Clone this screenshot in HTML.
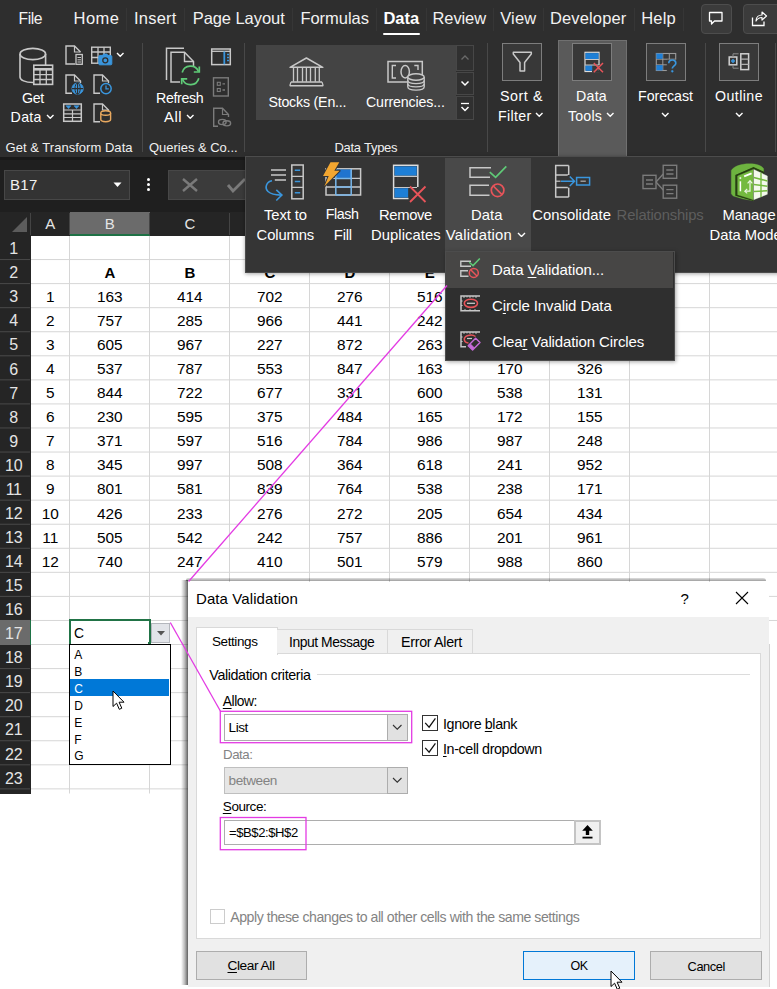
<!DOCTYPE html>
<html><head><meta charset="utf-8"><title>Data Validation</title>
<style>
html,body{margin:0;padding:0;}
body{width:777px;height:989px;overflow:hidden;position:relative;background:#fff;font-family:"Liberation Sans",sans-serif;}
.b{position:absolute;box-sizing:border-box;display:block;}
.t{position:absolute;white-space:nowrap;display:block;}
u{text-decoration:underline;text-underline-offset:2px;text-decoration-thickness:1px;}
</style></head><body>
<svg class="b" style="left:0px;top:0px;" width="777" height="989" viewBox="0 0 777 989"><g stroke="#d6d6d6" stroke-width="1" fill="none"><path d="M69.5 235.5 V793.5"/><path d="M149.5 235.5 V793.5"/><path d="M229.5 235.5 V793.5"/><path d="M309.5 235.5 V793.5"/><path d="M389.5 235.5 V793.5"/><path d="M469.5 235.5 V793.5"/><path d="M549.5 235.5 V793.5"/><path d="M629.5 235.5 V793.5"/><path d="M709.5 235.5 V793.5"/><path d="M30 259.56 H777"/><path d="M30 283.62 H777"/><path d="M30 307.68 H777"/><path d="M30 331.74 H777"/><path d="M30 355.8 H777"/><path d="M30 379.86 H777"/><path d="M30 403.92 H777"/><path d="M30 427.98 H777"/><path d="M30 452.04 H777"/><path d="M30 476.1 H777"/><path d="M30 500.16 H777"/><path d="M30 524.22 H777"/><path d="M30 548.28 H777"/><path d="M30 572.34 H777"/><path d="M30 596.4 H777"/><path d="M30 620.46 H777"/><path d="M30 644.52 H777"/><path d="M30 668.58 H777"/><path d="M30 692.64 H777"/><path d="M30 716.7 H777"/><path d="M30 740.76 H777"/><path d="M30 764.82 H777"/><path d="M30 788.88 H777"/></g></svg>
<span class="t" style="left:104.4px;top:263.9px;font-size:15px;line-height:18px;letter-spacing:0.00px;color:#000;font-weight:bold;">A</span>
<span class="t" style="left:184.4px;top:263.9px;font-size:15px;line-height:18px;letter-spacing:0.00px;color:#000;font-weight:bold;">B</span>
<span class="t" style="left:264.4px;top:263.9px;font-size:15px;line-height:18px;letter-spacing:0.00px;color:#000;font-weight:bold;">C</span>
<span class="t" style="left:344.4px;top:263.9px;font-size:15px;line-height:18px;letter-spacing:0.00px;color:#000;font-weight:bold;">D</span>
<span class="t" style="left:424.8px;top:263.9px;font-size:15px;line-height:18px;letter-spacing:0.00px;color:#000;font-weight:bold;">E</span>
<span class="t" style="left:505.2px;top:263.9px;font-size:15px;line-height:18px;letter-spacing:0.00px;color:#000;font-weight:bold;">F</span>
<span class="t" style="left:584.0px;top:263.9px;font-size:15px;line-height:18px;letter-spacing:0.00px;color:#000;font-weight:bold;">G</span>
<span class="t" style="left:46.0px;top:287.9px;font-size:15.4px;line-height:18px;letter-spacing:0.00px;color:#000;">1</span>
<span class="t" style="left:96.9px;top:287.9px;font-size:15.4px;line-height:18px;letter-spacing:0.05px;color:#000;">163</span>
<span class="t" style="left:176.9px;top:287.9px;font-size:15.4px;line-height:18px;letter-spacing:0.05px;color:#000;">414</span>
<span class="t" style="left:256.9px;top:287.9px;font-size:15.4px;line-height:18px;letter-spacing:0.05px;color:#000;">702</span>
<span class="t" style="left:336.9px;top:287.9px;font-size:15.4px;line-height:18px;letter-spacing:0.05px;color:#000;">276</span>
<span class="t" style="left:416.9px;top:287.9px;font-size:15.4px;line-height:18px;letter-spacing:0.05px;color:#000;">516</span>
<span class="t" style="left:496.9px;top:287.9px;font-size:15.4px;line-height:18px;letter-spacing:0.05px;color:#000;">358</span>
<span class="t" style="left:576.9px;top:287.9px;font-size:15.4px;line-height:18px;letter-spacing:0.05px;color:#000;">907</span>
<span class="t" style="left:46.0px;top:312.0px;font-size:15.4px;line-height:18px;letter-spacing:0.00px;color:#000;">2</span>
<span class="t" style="left:96.9px;top:312.0px;font-size:15.4px;line-height:18px;letter-spacing:0.05px;color:#000;">757</span>
<span class="t" style="left:176.9px;top:312.0px;font-size:15.4px;line-height:18px;letter-spacing:0.05px;color:#000;">285</span>
<span class="t" style="left:256.9px;top:312.0px;font-size:15.4px;line-height:18px;letter-spacing:0.05px;color:#000;">966</span>
<span class="t" style="left:336.9px;top:312.0px;font-size:15.4px;line-height:18px;letter-spacing:0.05px;color:#000;">441</span>
<span class="t" style="left:416.9px;top:312.0px;font-size:15.4px;line-height:18px;letter-spacing:0.05px;color:#000;">242</span>
<span class="t" style="left:496.9px;top:312.0px;font-size:15.4px;line-height:18px;letter-spacing:0.05px;color:#000;">619</span>
<span class="t" style="left:576.9px;top:312.0px;font-size:15.4px;line-height:18px;letter-spacing:0.05px;color:#000;">473</span>
<span class="t" style="left:46.0px;top:336.0px;font-size:15.4px;line-height:18px;letter-spacing:0.00px;color:#000;">3</span>
<span class="t" style="left:96.9px;top:336.0px;font-size:15.4px;line-height:18px;letter-spacing:0.05px;color:#000;">605</span>
<span class="t" style="left:176.9px;top:336.0px;font-size:15.4px;line-height:18px;letter-spacing:0.05px;color:#000;">967</span>
<span class="t" style="left:256.9px;top:336.0px;font-size:15.4px;line-height:18px;letter-spacing:0.05px;color:#000;">227</span>
<span class="t" style="left:336.9px;top:336.0px;font-size:15.4px;line-height:18px;letter-spacing:0.05px;color:#000;">872</span>
<span class="t" style="left:416.9px;top:336.0px;font-size:15.4px;line-height:18px;letter-spacing:0.05px;color:#000;">263</span>
<span class="t" style="left:496.9px;top:336.0px;font-size:15.4px;line-height:18px;letter-spacing:0.05px;color:#000;">745</span>
<span class="t" style="left:576.9px;top:336.0px;font-size:15.4px;line-height:18px;letter-spacing:0.05px;color:#000;">582</span>
<span class="t" style="left:46.0px;top:360.1px;font-size:15.4px;line-height:18px;letter-spacing:0.00px;color:#000;">4</span>
<span class="t" style="left:96.9px;top:360.1px;font-size:15.4px;line-height:18px;letter-spacing:0.05px;color:#000;">537</span>
<span class="t" style="left:176.9px;top:360.1px;font-size:15.4px;line-height:18px;letter-spacing:0.05px;color:#000;">787</span>
<span class="t" style="left:256.9px;top:360.1px;font-size:15.4px;line-height:18px;letter-spacing:0.05px;color:#000;">553</span>
<span class="t" style="left:336.9px;top:360.1px;font-size:15.4px;line-height:18px;letter-spacing:0.05px;color:#000;">847</span>
<span class="t" style="left:416.9px;top:360.1px;font-size:15.4px;line-height:18px;letter-spacing:0.05px;color:#000;">163</span>
<span class="t" style="left:496.9px;top:360.1px;font-size:15.4px;line-height:18px;letter-spacing:0.05px;color:#000;">170</span>
<span class="t" style="left:576.9px;top:360.1px;font-size:15.4px;line-height:18px;letter-spacing:0.05px;color:#000;">326</span>
<span class="t" style="left:46.0px;top:384.2px;font-size:15.4px;line-height:18px;letter-spacing:0.00px;color:#000;">5</span>
<span class="t" style="left:96.9px;top:384.2px;font-size:15.4px;line-height:18px;letter-spacing:0.05px;color:#000;">844</span>
<span class="t" style="left:176.9px;top:384.2px;font-size:15.4px;line-height:18px;letter-spacing:0.05px;color:#000;">722</span>
<span class="t" style="left:256.9px;top:384.2px;font-size:15.4px;line-height:18px;letter-spacing:0.05px;color:#000;">677</span>
<span class="t" style="left:336.9px;top:384.2px;font-size:15.4px;line-height:18px;letter-spacing:0.05px;color:#000;">331</span>
<span class="t" style="left:416.9px;top:384.2px;font-size:15.4px;line-height:18px;letter-spacing:0.05px;color:#000;">600</span>
<span class="t" style="left:496.9px;top:384.2px;font-size:15.4px;line-height:18px;letter-spacing:0.05px;color:#000;">538</span>
<span class="t" style="left:576.9px;top:384.2px;font-size:15.4px;line-height:18px;letter-spacing:0.05px;color:#000;">131</span>
<span class="t" style="left:46.0px;top:408.2px;font-size:15.4px;line-height:18px;letter-spacing:0.00px;color:#000;">6</span>
<span class="t" style="left:96.9px;top:408.2px;font-size:15.4px;line-height:18px;letter-spacing:0.05px;color:#000;">230</span>
<span class="t" style="left:176.9px;top:408.2px;font-size:15.4px;line-height:18px;letter-spacing:0.05px;color:#000;">595</span>
<span class="t" style="left:256.9px;top:408.2px;font-size:15.4px;line-height:18px;letter-spacing:0.05px;color:#000;">375</span>
<span class="t" style="left:336.9px;top:408.2px;font-size:15.4px;line-height:18px;letter-spacing:0.05px;color:#000;">484</span>
<span class="t" style="left:416.9px;top:408.2px;font-size:15.4px;line-height:18px;letter-spacing:0.05px;color:#000;">165</span>
<span class="t" style="left:496.9px;top:408.2px;font-size:15.4px;line-height:18px;letter-spacing:0.05px;color:#000;">172</span>
<span class="t" style="left:576.9px;top:408.2px;font-size:15.4px;line-height:18px;letter-spacing:0.05px;color:#000;">155</span>
<span class="t" style="left:46.0px;top:432.3px;font-size:15.4px;line-height:18px;letter-spacing:0.00px;color:#000;">7</span>
<span class="t" style="left:96.9px;top:432.3px;font-size:15.4px;line-height:18px;letter-spacing:0.05px;color:#000;">371</span>
<span class="t" style="left:176.9px;top:432.3px;font-size:15.4px;line-height:18px;letter-spacing:0.05px;color:#000;">597</span>
<span class="t" style="left:256.9px;top:432.3px;font-size:15.4px;line-height:18px;letter-spacing:0.05px;color:#000;">516</span>
<span class="t" style="left:336.9px;top:432.3px;font-size:15.4px;line-height:18px;letter-spacing:0.05px;color:#000;">784</span>
<span class="t" style="left:416.9px;top:432.3px;font-size:15.4px;line-height:18px;letter-spacing:0.05px;color:#000;">986</span>
<span class="t" style="left:496.9px;top:432.3px;font-size:15.4px;line-height:18px;letter-spacing:0.05px;color:#000;">987</span>
<span class="t" style="left:576.9px;top:432.3px;font-size:15.4px;line-height:18px;letter-spacing:0.05px;color:#000;">248</span>
<span class="t" style="left:46.0px;top:456.3px;font-size:15.4px;line-height:18px;letter-spacing:0.00px;color:#000;">8</span>
<span class="t" style="left:96.9px;top:456.3px;font-size:15.4px;line-height:18px;letter-spacing:0.05px;color:#000;">345</span>
<span class="t" style="left:176.9px;top:456.3px;font-size:15.4px;line-height:18px;letter-spacing:0.05px;color:#000;">997</span>
<span class="t" style="left:256.9px;top:456.3px;font-size:15.4px;line-height:18px;letter-spacing:0.05px;color:#000;">508</span>
<span class="t" style="left:336.9px;top:456.3px;font-size:15.4px;line-height:18px;letter-spacing:0.05px;color:#000;">364</span>
<span class="t" style="left:416.9px;top:456.3px;font-size:15.4px;line-height:18px;letter-spacing:0.05px;color:#000;">618</span>
<span class="t" style="left:496.9px;top:456.3px;font-size:15.4px;line-height:18px;letter-spacing:0.05px;color:#000;">241</span>
<span class="t" style="left:576.9px;top:456.3px;font-size:15.4px;line-height:18px;letter-spacing:0.05px;color:#000;">952</span>
<span class="t" style="left:46.0px;top:480.4px;font-size:15.4px;line-height:18px;letter-spacing:0.00px;color:#000;">9</span>
<span class="t" style="left:96.9px;top:480.4px;font-size:15.4px;line-height:18px;letter-spacing:0.05px;color:#000;">801</span>
<span class="t" style="left:176.9px;top:480.4px;font-size:15.4px;line-height:18px;letter-spacing:0.05px;color:#000;">581</span>
<span class="t" style="left:256.9px;top:480.4px;font-size:15.4px;line-height:18px;letter-spacing:0.05px;color:#000;">839</span>
<span class="t" style="left:336.9px;top:480.4px;font-size:15.4px;line-height:18px;letter-spacing:0.05px;color:#000;">764</span>
<span class="t" style="left:416.9px;top:480.4px;font-size:15.4px;line-height:18px;letter-spacing:0.05px;color:#000;">538</span>
<span class="t" style="left:496.9px;top:480.4px;font-size:15.4px;line-height:18px;letter-spacing:0.05px;color:#000;">238</span>
<span class="t" style="left:576.9px;top:480.4px;font-size:15.4px;line-height:18px;letter-spacing:0.05px;color:#000;">171</span>
<span class="t" style="left:41.7px;top:504.5px;font-size:15.4px;line-height:18px;letter-spacing:0.05px;color:#000;">10</span>
<span class="t" style="left:96.9px;top:504.5px;font-size:15.4px;line-height:18px;letter-spacing:0.05px;color:#000;">426</span>
<span class="t" style="left:176.9px;top:504.5px;font-size:15.4px;line-height:18px;letter-spacing:0.05px;color:#000;">233</span>
<span class="t" style="left:256.9px;top:504.5px;font-size:15.4px;line-height:18px;letter-spacing:0.05px;color:#000;">276</span>
<span class="t" style="left:336.9px;top:504.5px;font-size:15.4px;line-height:18px;letter-spacing:0.05px;color:#000;">272</span>
<span class="t" style="left:416.9px;top:504.5px;font-size:15.4px;line-height:18px;letter-spacing:0.05px;color:#000;">205</span>
<span class="t" style="left:496.9px;top:504.5px;font-size:15.4px;line-height:18px;letter-spacing:0.05px;color:#000;">654</span>
<span class="t" style="left:576.9px;top:504.5px;font-size:15.4px;line-height:18px;letter-spacing:0.05px;color:#000;">434</span>
<span class="t" style="left:42.3px;top:528.5px;font-size:15.4px;line-height:18px;letter-spacing:0.05px;color:#000;">11</span>
<span class="t" style="left:96.9px;top:528.5px;font-size:15.4px;line-height:18px;letter-spacing:0.05px;color:#000;">505</span>
<span class="t" style="left:176.9px;top:528.5px;font-size:15.4px;line-height:18px;letter-spacing:0.05px;color:#000;">542</span>
<span class="t" style="left:256.9px;top:528.5px;font-size:15.4px;line-height:18px;letter-spacing:0.05px;color:#000;">242</span>
<span class="t" style="left:336.9px;top:528.5px;font-size:15.4px;line-height:18px;letter-spacing:0.05px;color:#000;">757</span>
<span class="t" style="left:416.9px;top:528.5px;font-size:15.4px;line-height:18px;letter-spacing:0.05px;color:#000;">886</span>
<span class="t" style="left:496.9px;top:528.5px;font-size:15.4px;line-height:18px;letter-spacing:0.05px;color:#000;">201</span>
<span class="t" style="left:576.9px;top:528.5px;font-size:15.4px;line-height:18px;letter-spacing:0.05px;color:#000;">961</span>
<span class="t" style="left:41.7px;top:552.6px;font-size:15.4px;line-height:18px;letter-spacing:0.05px;color:#000;">12</span>
<span class="t" style="left:96.9px;top:552.6px;font-size:15.4px;line-height:18px;letter-spacing:0.05px;color:#000;">740</span>
<span class="t" style="left:176.9px;top:552.6px;font-size:15.4px;line-height:18px;letter-spacing:0.05px;color:#000;">247</span>
<span class="t" style="left:256.9px;top:552.6px;font-size:15.4px;line-height:18px;letter-spacing:0.05px;color:#000;">410</span>
<span class="t" style="left:336.9px;top:552.6px;font-size:15.4px;line-height:18px;letter-spacing:0.05px;color:#000;">501</span>
<span class="t" style="left:416.9px;top:552.6px;font-size:15.4px;line-height:18px;letter-spacing:0.05px;color:#000;">579</span>
<span class="t" style="left:496.9px;top:552.6px;font-size:15.4px;line-height:18px;letter-spacing:0.05px;color:#000;">988</span>
<span class="t" style="left:576.9px;top:552.6px;font-size:15.4px;line-height:18px;letter-spacing:0.05px;color:#000;">860</span>
<div class="b " style="left:0px;top:212px;width:31px;height:581.5px;background:#252525;"></div>
<svg class="b" style="left:0px;top:0px;" width="31" height="800" viewBox="0 0 31 800"><g stroke="#4a4a4a" stroke-width="1"><path d="M0 259.56 H30"/><path d="M0 283.62 H30"/><path d="M0 307.68 H30"/><path d="M0 331.74 H30"/><path d="M0 355.8 H30"/><path d="M0 379.86 H30"/><path d="M0 403.92 H30"/><path d="M0 427.98 H30"/><path d="M0 452.04 H30"/><path d="M0 476.1 H30"/><path d="M0 500.16 H30"/><path d="M0 524.22 H30"/><path d="M0 548.28 H30"/><path d="M0 572.34 H30"/><path d="M0 596.4 H30"/><path d="M0 620.46 H30"/><path d="M0 644.52 H30"/><path d="M0 668.58 H30"/><path d="M0 692.64 H30"/><path d="M0 716.7 H30"/><path d="M0 740.76 H30"/><path d="M0 764.82 H30"/><path d="M0 788.88 H30"/></g></svg>
<div class="b " style="left:0px;top:620.46px;width:30px;height:24.06px;background:#6b6b6b;"></div>
<div class="b " style="left:29.5px;top:619.96px;width:1.5px;height:25.06px;background:#1e7145;"></div>
<span class="t" style="left:9.3px;top:239.2px;font-size:16px;line-height:19px;letter-spacing:0.00px;color:#e4e4e4;">1</span>
<span class="t" style="left:9.3px;top:263.3px;font-size:16px;line-height:19px;letter-spacing:0.00px;color:#e4e4e4;">2</span>
<span class="t" style="left:9.3px;top:287.3px;font-size:16px;line-height:19px;letter-spacing:0.00px;color:#e4e4e4;">3</span>
<span class="t" style="left:9.3px;top:311.4px;font-size:16px;line-height:19px;letter-spacing:0.00px;color:#e4e4e4;">4</span>
<span class="t" style="left:9.3px;top:335.4px;font-size:16px;line-height:19px;letter-spacing:0.00px;color:#e4e4e4;">5</span>
<span class="t" style="left:9.3px;top:359.5px;font-size:16px;line-height:19px;letter-spacing:0.00px;color:#e4e4e4;">6</span>
<span class="t" style="left:9.3px;top:383.6px;font-size:16px;line-height:19px;letter-spacing:0.00px;color:#e4e4e4;">7</span>
<span class="t" style="left:9.3px;top:407.6px;font-size:16px;line-height:19px;letter-spacing:0.00px;color:#e4e4e4;">8</span>
<span class="t" style="left:9.3px;top:431.7px;font-size:16px;line-height:19px;letter-spacing:0.00px;color:#e4e4e4;">9</span>
<span class="t" style="left:5.1px;top:455.7px;font-size:16px;line-height:19px;letter-spacing:-0.30px;color:#e4e4e4;">10</span>
<span class="t" style="left:5.7px;top:479.8px;font-size:16px;line-height:19px;letter-spacing:-0.30px;color:#e4e4e4;">11</span>
<span class="t" style="left:5.1px;top:503.9px;font-size:16px;line-height:19px;letter-spacing:-0.30px;color:#e4e4e4;">12</span>
<span class="t" style="left:5.1px;top:527.9px;font-size:16px;line-height:19px;letter-spacing:-0.30px;color:#e4e4e4;">13</span>
<span class="t" style="left:5.1px;top:552.0px;font-size:16px;line-height:19px;letter-spacing:-0.30px;color:#e4e4e4;">14</span>
<span class="t" style="left:5.1px;top:576.0px;font-size:16px;line-height:19px;letter-spacing:-0.30px;color:#e4e4e4;">15</span>
<span class="t" style="left:5.1px;top:600.1px;font-size:16px;line-height:19px;letter-spacing:-0.30px;color:#e4e4e4;">16</span>
<span class="t" style="left:5.1px;top:624.2px;font-size:16px;line-height:19px;letter-spacing:-0.30px;color:#e4e4e4;">17</span>
<span class="t" style="left:5.1px;top:648.2px;font-size:16px;line-height:19px;letter-spacing:-0.30px;color:#e4e4e4;">18</span>
<span class="t" style="left:5.1px;top:672.3px;font-size:16px;line-height:19px;letter-spacing:-0.30px;color:#e4e4e4;">19</span>
<span class="t" style="left:5.1px;top:696.3px;font-size:16px;line-height:19px;letter-spacing:-0.30px;color:#e4e4e4;">20</span>
<span class="t" style="left:5.1px;top:720.4px;font-size:16px;line-height:19px;letter-spacing:-0.30px;color:#e4e4e4;">21</span>
<span class="t" style="left:5.1px;top:744.5px;font-size:16px;line-height:19px;letter-spacing:-0.30px;color:#e4e4e4;">22</span>
<span class="t" style="left:5.1px;top:768.5px;font-size:16px;line-height:19px;letter-spacing:-0.30px;color:#e4e4e4;">23</span>
<div class="b " style="left:0px;top:157px;width:777px;height:55px;background:#1f1f1f;"></div>
<div class="b " style="left:0px;top:157px;width:777px;height:3px;background:#191919;"></div>
<div class="b " style="left:0px;top:212px;width:777px;height:23.5px;background:#252525;"></div>
<div class="b " style="left:69.5px;top:212px;width:80px;height:23.5px;background:#6b6b6b;"></div>
<div class="b " style="left:69.5px;top:234.2px;width:80px;height:1.6px;background:#1e7145;"></div>
<svg class="b" style="left:0px;top:0px;" width="777" height="240" viewBox="0 0 777 240"><g stroke="#444444" stroke-width="1"><path d="M30.5 213 V235"/><path d="M69.5 213 V235"/><path d="M149.5 213 V235"/><path d="M229.5 213 V235"/><path d="M309.5 213 V235"/><path d="M389.5 213 V235"/><path d="M469.5 213 V235"/><path d="M549.5 213 V235"/><path d="M629.5 213 V235"/><path d="M709.5 213 V235"/></g></svg>
<svg class="b" style="left:11px;top:216px;" width="17" height="17" viewBox="0 0 17 17"><path d="M16 1 V16 H1 Z" fill="#5c5c5c"/></svg>
<span class="t" style="left:45.3px;top:215.0px;font-size:15px;line-height:18px;letter-spacing:0.00px;color:#e4e4e4;">A</span>
<span class="t" style="left:104.8px;top:215.0px;font-size:15px;line-height:18px;letter-spacing:0.00px;color:#e4e4e4;">B</span>
<span class="t" style="left:184.4px;top:215.0px;font-size:15px;line-height:18px;letter-spacing:0.00px;color:#e4e4e4;">C</span>
<span class="t" style="left:264.4px;top:215.0px;font-size:15px;line-height:18px;letter-spacing:0.00px;color:#e4e4e4;">D</span>
<span class="t" style="left:344.8px;top:215.0px;font-size:15px;line-height:18px;letter-spacing:0.00px;color:#e4e4e4;">E</span>
<span class="t" style="left:425.2px;top:215.0px;font-size:15px;line-height:18px;letter-spacing:0.00px;color:#e4e4e4;">F</span>
<span class="t" style="left:504.0px;top:215.0px;font-size:15px;line-height:18px;letter-spacing:0.00px;color:#e4e4e4;">G</span>
<span class="t" style="left:584.4px;top:215.0px;font-size:15px;line-height:18px;letter-spacing:0.00px;color:#e4e4e4;">H</span>
<span class="t" style="left:667.7px;top:215.0px;font-size:15px;line-height:18px;letter-spacing:0.00px;color:#e4e4e4;">I</span>
<div class="b " style="left:3.5px;top:170px;width:126.5px;height:29.5px;background:#333333;border:1px solid #474747;"></div>
<span class="t" style="left:10.0px;top:176.0px;font-size:15px;line-height:18px;letter-spacing:0.27px;color:#f0f0f0;">B17</span>
<svg class="b" style="left:113px;top:182px;" width="9" height="6" viewBox="0 0 9 6"><path d="M0.5 0.5 H8.5 L4.5 5 Z" fill="#fff"/></svg>
<svg class="b" style="left:146px;top:177px;" width="5" height="15" viewBox="0 0 5 15"><circle cx="2.5" cy="2.5" r="1.5" fill="#fff"/><circle cx="2.5" cy="7.5" r="1.5" fill="#fff"/><circle cx="2.5" cy="12.5" r="1.5" fill="#fff"/></svg>
<div class="b " style="left:167.5px;top:170px;width:132.5px;height:29.5px;background:#3b3b3b;border:1px solid #474747;"></div>
<svg class="b" style="left:181px;top:177px;" width="18" height="16" viewBox="0 0 18 16"><path d="M2 2 L16 14 M16 2 L2 14" stroke="#7a7a7a" stroke-width="2.4" fill="none"/></svg>
<svg class="b" style="left:226px;top:177px;" width="20" height="16" viewBox="0 0 20 16"><path d="M2 8 L7 14 L19 2" stroke="#7a7a7a" stroke-width="2.8" fill="none"/></svg>
<div class="b " style="left:0px;top:0px;width:777px;height:157px;background:#2e2e2e;"></div>
<span class="t" style="left:18.5px;top:8.9px;font-size:15.7px;line-height:19px;letter-spacing:-0.45px;color:#f2f2f2;">File</span>
<span class="t" style="left:73.5px;top:8.4px;font-size:16.5px;line-height:20px;letter-spacing:0.50px;color:#f2f2f2;">Home</span>
<span class="t" style="left:134.0px;top:8.4px;font-size:16.5px;line-height:20px;letter-spacing:0.21px;color:#f2f2f2;">Insert</span>
<span class="t" style="left:192.7px;top:8.4px;font-size:16.5px;line-height:20px;letter-spacing:-0.06px;color:#f2f2f2;">Page Layout</span>
<span class="t" style="left:300.4px;top:8.4px;font-size:16.5px;line-height:20px;letter-spacing:-0.02px;color:#f2f2f2;">Formulas</span>
<span class="t" style="left:432.5px;top:8.4px;font-size:16.5px;line-height:20px;letter-spacing:-0.10px;color:#f2f2f2;">Review</span>
<span class="t" style="left:500.3px;top:8.4px;font-size:16.5px;line-height:20px;letter-spacing:0.11px;color:#f2f2f2;">View</span>
<span class="t" style="left:550.0px;top:8.4px;font-size:16.5px;line-height:20px;letter-spacing:0.13px;color:#f2f2f2;">Developer</span>
<span class="t" style="left:641.3px;top:8.4px;font-size:16.5px;line-height:20px;letter-spacing:0.12px;color:#f2f2f2;">Help</span>
<span class="t" style="left:383.4px;top:8.4px;font-size:16.5px;line-height:20px;letter-spacing:0.01px;color:#ffffff;font-weight:bold;">Data</span>
<div class="b " style="left:383px;top:32.5px;width:37px;height:2.7px;background:#ffffff;border-radius:1px;"></div>
<div class="b " style="left:126px;top:8px;width:1px;height:23px;background:#363636;"></div>
<div class="b " style="left:184px;top:8px;width:1px;height:23px;background:#363636;"></div>
<div class="b " style="left:292px;top:8px;width:1px;height:23px;background:#363636;"></div>
<div class="b " style="left:376px;top:8px;width:1px;height:23px;background:#363636;"></div>
<div class="b " style="left:426px;top:8px;width:1px;height:23px;background:#363636;"></div>
<div class="b " style="left:493px;top:8px;width:1px;height:23px;background:#363636;"></div>
<div class="b " style="left:543px;top:8px;width:1px;height:23px;background:#363636;"></div>
<div class="b " style="left:634px;top:8px;width:1px;height:23px;background:#363636;"></div>
<div class="b " style="left:683px;top:8px;width:1px;height:23px;background:#363636;"></div>
<div class="b " style="left:700.5px;top:4px;width:31px;height:29.5px;background:#3b3b3b;border:1px solid #4d4d4d;border-radius:4px;"></div>
<div class="b " style="left:742.5px;top:4px;width:47.5px;height:29.5px;background:#3b3b3b;border:1px solid #4d4d4d;border-radius:4px;"></div>
<svg class="b" style="left:708px;top:11px;" width="16" height="15" viewBox="0 0 16 15"><path d="M1.5 1.5 H14 V10 H6.5 L3.5 13 V10 H1.5 Z" fill="none" stroke="#fff" stroke-width="1.3" stroke-linejoin="round"/></svg>
<svg class="b" style="left:751px;top:10px;" width="17" height="17" viewBox="0 0 17 17"><path d="M1.5 7.5 V15.5 H13 V11.5" fill="none" stroke="#fff" stroke-width="1.3"/><path d="M5 11 C5 7 8 5 11 5 V2 L15.5 6 L11 10 V7.5 C8.5 7.5 6.5 8.5 5 11 Z" fill="none" stroke="#fff" stroke-width="1.2" stroke-linejoin="round"/></svg>
<div class="b " style="left:142px;top:43px;width:1px;height:109px;background:#484848;"></div>
<div class="b " style="left:244px;top:43px;width:1px;height:109px;background:#484848;"></div>
<div class="b " style="left:487px;top:43px;width:1px;height:109px;background:#484848;"></div>
<div class="b " style="left:704.5px;top:43px;width:1px;height:109px;background:#484848;"></div>
<div class="b " style="left:775px;top:43px;width:1px;height:109px;background:#484848;"></div>
<span class="t" style="left:22.0px;top:89.5px;font-size:14.2px;line-height:17px;letter-spacing:-0.30px;color:#fff;">Get</span>
<span class="t" style="left:10.6px;top:108.5px;font-size:14.2px;line-height:17px;letter-spacing:0.30px;color:#fff;">Data</span>
<svg class="b" style="left:45.75px;top:113.775px;" width="8.5" height="5.25" viewBox="0 0 8.5 5.25"><path d="M1 1 L4.25 4.25 L7.5 1" fill="none" stroke="#fff" stroke-width="1.4"/></svg>
<span class="t" style="left:5.5px;top:139.6px;font-size:13px;line-height:16px;letter-spacing:0.03px;color:#f0f0f0;">Get &amp; Transform Data</span>
<span class="t" style="left:156.0px;top:89.5px;font-size:14.2px;line-height:17px;letter-spacing:-0.35px;color:#fff;">Refresh</span>
<span class="t" style="left:164.0px;top:108.0px;font-size:14.8px;line-height:18px;letter-spacing:0.52px;color:#fff;">All</span>
<svg class="b" style="left:186.05px;top:113.775px;" width="8.5" height="5.25" viewBox="0 0 8.5 5.25"><path d="M1 1 L4.25 4.25 L7.5 1" fill="none" stroke="#fff" stroke-width="1.4"/></svg>
<span class="t" style="left:149.0px;top:139.6px;font-size:13px;line-height:16px;letter-spacing:-0.02px;color:#f0f0f0;">Queries &amp; Co...</span>
<svg class="b" style="left:116.25px;top:52.375px;" width="8.5" height="5.25" viewBox="0 0 8.5 5.25"><path d="M1 1 L4.25 4.25 L7.5 1" fill="none" stroke="#fff" stroke-width="1.4"/></svg>
<div class="b " style="left:256px;top:45px;width:199.5px;height:74.5px;background:#444444;"></div>
<div class="b " style="left:455.5px;top:45px;width:18px;height:25.5px;background:#303030;border:1px solid #474747;"></div>
<div class="b " style="left:455.5px;top:71.5px;width:18px;height:23.5px;background:#303030;border:1px solid #474747;"></div>
<div class="b " style="left:455.5px;top:96px;width:18px;height:23.5px;background:#303030;border:1px solid #474747;"></div>
<svg class="b" style="left:460px;top:54px;" width="10" height="7" viewBox="0 0 10 7"><path d="M1.5 5.5 L5 2 L8.5 5.5" fill="none" stroke="#6a6a6a" stroke-width="1.3"/></svg>
<svg class="b" style="left:460px;top:80px;" width="10" height="7" viewBox="0 0 10 7"><path d="M1.5 1.5 L5 5 L8.5 1.5" fill="none" stroke="#fff" stroke-width="1.5"/></svg>
<svg class="b" style="left:460px;top:102px;" width="10" height="12" viewBox="0 0 10 12"><path d="M1 1.5 H9" stroke="#fff" stroke-width="1.3"/><path d="M1.5 5 L5 8.5 L8.5 5" fill="none" stroke="#fff" stroke-width="1.5"/></svg>
<span class="t" style="left:268.4px;top:94.3px;font-size:14.2px;line-height:17px;letter-spacing:-0.19px;color:#fff;">Stocks (En...</span>
<span class="t" style="left:366.0px;top:94.3px;font-size:14.2px;line-height:17px;letter-spacing:-0.13px;color:#fff;">Currencies...</span>
<span class="t" style="left:334.4px;top:139.6px;font-size:13px;line-height:16px;letter-spacing:-0.26px;color:#f0f0f0;">Data Types</span>
<div class="b " style="left:557.5px;top:39.5px;width:69.5px;height:117.5px;background:#5a5a5a;border:1px solid #707070;border-bottom:none;"></div>
<div class="b " style="left:501.8px;top:43.2px;width:40.2px;height:37.6px;background:#383838;border:1px solid #7d7d7d;"></div>
<div class="b " style="left:572.4px;top:43.2px;width:39.4px;height:37.6px;background:#383838;border:1px solid #7d7d7d;"></div>
<div class="b " style="left:646px;top:43.2px;width:39.6px;height:37.6px;background:#383838;border:1px solid #7d7d7d;"></div>
<div class="b " style="left:719px;top:43.2px;width:40px;height:37.6px;background:#383838;border:1px solid #7d7d7d;"></div>
<span class="t" style="left:500.0px;top:87.5px;font-size:14.3px;line-height:17px;letter-spacing:0.54px;color:#fff;">Sort &amp;</span>
<span class="t" style="left:498.0px;top:107.5px;font-size:14.2px;line-height:17px;letter-spacing:0.34px;color:#fff;">Filter</span>
<svg class="b" style="left:535.05px;top:112.375px;" width="8.5" height="5.25" viewBox="0 0 8.5 5.25"><path d="M1 1 L4.25 4.25 L7.5 1" fill="none" stroke="#fff" stroke-width="1.4"/></svg>
<span class="t" style="left:576.0px;top:87.5px;font-size:14.2px;line-height:17px;letter-spacing:0.25px;color:#fff;">Data</span>
<span class="t" style="left:568.0px;top:107.5px;font-size:14.2px;line-height:17px;letter-spacing:0.17px;color:#fff;">Tools</span>
<svg class="b" style="left:606.25px;top:112.375px;" width="8.5" height="5.25" viewBox="0 0 8.5 5.25"><path d="M1 1 L4.25 4.25 L7.5 1" fill="none" stroke="#fff" stroke-width="1.4"/></svg>
<span class="t" style="left:638.0px;top:87.5px;font-size:14.2px;line-height:17px;letter-spacing:-0.03px;color:#fff;">Forecast</span>
<svg class="b" style="left:661.15px;top:112.375px;" width="8.5" height="5.25" viewBox="0 0 8.5 5.25"><path d="M1 1 L4.25 4.25 L7.5 1" fill="none" stroke="#fff" stroke-width="1.4"/></svg>
<span class="t" style="left:715.0px;top:87.5px;font-size:14.2px;line-height:17px;letter-spacing:0.43px;color:#fff;">Outline</span>
<svg class="b" style="left:734.55px;top:112.375px;" width="8.5" height="5.25" viewBox="0 0 8.5 5.25"><path d="M1 1 L4.25 4.25 L7.5 1" fill="none" stroke="#fff" stroke-width="1.4"/></svg>
<div class="b " style="left:245px;top:156.3px;width:545px;height:117.2px;background:#353535;border:1px solid #4c4c4c;box-shadow:0 1px 4px rgba(0,0,0,0.35);"></div>
<div class="b " style="left:444.5px;top:157.5px;width:86px;height:93.5px;background:#494949;"></div>
<span class="t" style="left:264.0px;top:205.5px;font-size:14.8px;line-height:18px;letter-spacing:-0.11px;color:#fff;">Text to</span>
<span class="t" style="left:256.6px;top:225.6px;font-size:14.8px;line-height:18px;letter-spacing:-0.14px;color:#fff;">Columns</span>
<span class="t" style="left:325.7px;top:206.0px;font-size:14.3px;line-height:17px;letter-spacing:-0.43px;color:#fff;">Flash</span>
<span class="t" style="left:333.8px;top:225.6px;font-size:14.8px;line-height:18px;letter-spacing:-0.18px;color:#fff;">Fill</span>
<span class="t" style="left:379.0px;top:205.5px;font-size:14.8px;line-height:18px;letter-spacing:-0.35px;color:#fff;">Remove</span>
<span class="t" style="left:371.0px;top:225.6px;font-size:14.8px;line-height:18px;letter-spacing:0.07px;color:#fff;">Duplicates</span>
<span class="t" style="left:471.0px;top:205.5px;font-size:14.8px;line-height:18px;letter-spacing:0.06px;color:#fff;">Data</span>
<span class="t" style="left:445.8px;top:225.6px;font-size:14.8px;line-height:18px;letter-spacing:0.23px;color:#fff;">Validation</span>
<svg class="b" style="left:516.8px;top:231.75px;" width="9" height="5.5" viewBox="0 0 9 5.5"><path d="M1 1 L4.5 4.5 L8 1" fill="none" stroke="#fff" stroke-width="1.4"/></svg>
<span class="t" style="left:532.2px;top:205.5px;font-size:14.8px;line-height:18px;letter-spacing:0.06px;color:#fff;">Consolidate</span>
<span class="t" style="left:616.6px;top:205.5px;font-size:14.8px;line-height:18px;letter-spacing:-0.14px;color:#5e5e5e;">Relationships</span>
<span class="t" style="left:722.4px;top:205.5px;font-size:14.8px;line-height:18px;letter-spacing:-0.05px;color:#fff;">Manage</span>
<span class="t" style="left:709.5px;top:225.6px;font-size:14.8px;line-height:18px;letter-spacing:-0.02px;color:#fff;">Data Model</span>
<div class="b " style="left:444.5px;top:251px;width:230.1px;height:110.3px;background:#2f2f2f;border:1px solid #4c4c4c;box-shadow:1px 1px 4px rgba(0,0,0,0.35);"></div>
<div class="b " style="left:445.8px;top:252.2px;width:227.4px;height:35.6px;background:#474645;"></div>
<span class="t" style="left:492.0px;top:261.0px;font-size:15px;line-height:18px;letter-spacing:-0.06px;color:#fff;">Data <u>V</u>alidation...</span>
<span class="t" style="left:492.0px;top:296.5px;font-size:15px;line-height:18px;letter-spacing:-0.11px;color:#fff;">C<u>i</u>rcle Invalid Data</span>
<span class="t" style="left:492.0px;top:332.5px;font-size:15px;line-height:18px;letter-spacing:-0.11px;color:#fff;">Clea<u>r</u> Validation Circles</span>
<div class="b " style="left:68.5px;top:619px;width:82px;height:25.5px;background:#ffffff;border:2px solid #217346;border-bottom:none;"></div>
<div class="b " style="left:147.5px;top:641.5px;width:3.5px;height:3.5px;background:#217346;"></div>
<span class="t" style="left:74.0px;top:624.7px;font-size:13.9px;line-height:17px;letter-spacing:-0.44px;color:#000;">C</span>
<div class="b " style="left:150.7px;top:622.5px;width:19.8px;height:20.2px;background:#e2e4e9;border:1px solid #b4b7bd;"></div>
<svg class="b" style="left:156.5px;top:630.5px;" width="8" height="5" viewBox="0 0 8 5"><path d="M0 0 H8 L4 4.5 Z" fill="#555"/></svg>
<div class="b " style="left:69px;top:644px;width:102px;height:121px;background:#ffffff;border:1px solid #000000;"></div>
<div class="b " style="left:70px;top:679.3px;width:99.2px;height:16.7px;background:#0078d7;"></div>
<span class="t" style="left:74.3px;top:648.0px;font-size:12px;line-height:14px;letter-spacing:-0.00px;color:#000;">A</span>
<span class="t" style="left:74.3px;top:664.9px;font-size:12px;line-height:14px;letter-spacing:-0.00px;color:#000;">B</span>
<span class="t" style="left:74.3px;top:681.8px;font-size:12px;line-height:14px;letter-spacing:0.00px;color:#fff;">C</span>
<span class="t" style="left:74.3px;top:698.7px;font-size:12px;line-height:14px;letter-spacing:0.00px;color:#000;">D</span>
<span class="t" style="left:74.3px;top:715.6px;font-size:12px;line-height:14px;letter-spacing:-0.00px;color:#000;">E</span>
<span class="t" style="left:74.3px;top:732.5px;font-size:12px;line-height:14px;letter-spacing:0.00px;color:#000;">F</span>
<span class="t" style="left:74.3px;top:749.4px;font-size:12px;line-height:14px;letter-spacing:-0.00px;color:#000;">G</span>
<div class="b " style="left:769px;top:644.2px;width:8px;height:344.8px;background:#ffffff;"></div>
<div class="b " style="left:768.8px;top:644px;width:1px;height:342.5px;background:#d4d4d4;"></div>
<div class="b " style="left:181.3px;top:579.5px;width:6.7px;height:405.5px;background:linear-gradient(to left,rgba(0,0,0,0.62),rgba(0,0,0,0.28) 45%,rgba(0,0,0,0));"></div>
<div class="b " style="left:186px;top:578.2px;width:579.5px;height:3.3px;background:linear-gradient(to top,rgba(0,0,0,0.38),rgba(0,0,0,0.12));border-radius:2px 3px 0 0;"></div>
<div class="b " style="left:188px;top:581.5px;width:580.8px;height:405px;background:#f0f0f0;"></div>
<div class="b " style="left:188px;top:581.5px;width:580.8px;height:35.5px;background:#ffffff;"></div>
<span class="t" style="left:196.0px;top:589.7px;font-size:15px;line-height:18px;letter-spacing:0.09px;color:#000;">Data Validation</span>
<span class="t" style="left:680.5px;top:589.5px;font-size:15px;line-height:18px;letter-spacing:0.00px;color:#000;">?</span>
<svg class="b" style="left:735px;top:591px;" width="14" height="14" viewBox="0 0 14 14"><path d="M1 1 L13 13 M13 1 L1 13" stroke="#000" stroke-width="1.1" fill="none"/></svg>
<div class="b " style="left:195.5px;top:653px;width:565.5px;height:285.5px;background:#ffffff;border:1px solid #d9d9d9;"></div>
<div class="b " style="left:195.5px;top:626.5px;width:82px;height:28px;background:#ffffff;border:1px solid #d9d9d9;border-bottom:none;"></div>
<div class="b " style="left:277px;top:628.6px;width:111px;height:24.9px;background:#f0f0f0;border:1px solid #d9d9d9;border-left:none;border-bottom:none;"></div>
<div class="b " style="left:387px;top:628.6px;width:86px;height:24.9px;background:#f0f0f0;border:1px solid #d9d9d9;border-bottom:none;"></div>
<span class="t" style="left:212.0px;top:633.8px;font-size:13.5px;line-height:16px;letter-spacing:-0.41px;color:#000;">Settings</span>
<span class="t" style="left:289.0px;top:634.0px;font-size:13.9px;line-height:17px;letter-spacing:-0.44px;color:#000;">Input Message</span>
<span class="t" style="left:401.0px;top:634.0px;font-size:14.3px;line-height:17px;letter-spacing:-0.31px;color:#000;">Error Alert</span>
<span class="t" style="left:209.3px;top:666.8px;font-size:14.3px;line-height:17px;letter-spacing:-0.39px;color:#000;">Validation criteria</span>
<div class="b " style="left:316.5px;top:674px;width:433px;height:1px;background:#dcdcdc;"></div>
<span class="t" style="left:222.8px;top:692.7px;font-size:13.8px;line-height:17px;letter-spacing:-0.44px;color:#000;"><u>A</u>llow:</span>
<div class="b " style="left:223.5px;top:713.5px;width:184.8px;height:27px;background:#ffffff;border:1px solid #adadad;"></div>
<div class="b " style="left:386.5px;top:713.5px;width:21.8px;height:27px;background:#e1e1e1;border:1px solid #adadad;"></div>
<svg class="b" style="left:392.05px;top:724.175px;" width="10.5" height="6.25" viewBox="0 0 10.5 6.25"><path d="M1 1 L5.25 5.25 L9.5 1" fill="none" stroke="#333" stroke-width="1.1"/></svg>
<span class="t" style="left:228.5px;top:719.6px;font-size:13.6px;line-height:16px;letter-spacing:-0.42px;color:#000;">List</span>
<div class="b " style="left:422px;top:715.3px;width:16px;height:16px;background:#ffffff;border:1px solid #333333;"></div>
<svg class="b" style="left:422px;top:715.3px;" width="16" height="16" viewBox="0 0 16 16"><path d="M3.2 7.9 L7.1 12.2 L13.4 3.4" fill="none" stroke="#111" stroke-width="1.25"/></svg>
<span class="t" style="left:443.0px;top:715.8px;font-size:14.3px;line-height:17px;letter-spacing:-0.39px;color:#000;">Ignore <u>b</u>lank</span>
<div class="b " style="left:422px;top:740.4px;width:16px;height:16px;background:#ffffff;border:1px solid #333333;"></div>
<svg class="b" style="left:422px;top:740.4px;" width="16" height="16" viewBox="0 0 16 16"><path d="M3.2 7.9 L7.1 12.2 L13.4 3.4" fill="none" stroke="#111" stroke-width="1.25"/></svg>
<span class="t" style="left:443.0px;top:740.9px;font-size:14.3px;line-height:17px;letter-spacing:-0.38px;color:#000;"><u>I</u>n-cell dropdown</span>
<span class="t" style="left:223.0px;top:746.8px;font-size:13.3px;line-height:16px;letter-spacing:-0.44px;color:#838383;">Data:</span>
<div class="b " style="left:223.5px;top:766.5px;width:184.8px;height:27.5px;background:#e6e6e6;border:1px solid #bfbfbf;"></div>
<div class="b " style="left:386.5px;top:766.5px;width:21.8px;height:27.5px;background:#e1e1e1;border:1px solid #adadad;"></div>
<svg class="b" style="left:392.05px;top:777.375px;" width="10.5" height="6.25" viewBox="0 0 10.5 6.25"><path d="M1 1 L5.25 5.25 L9.5 1" fill="none" stroke="#333" stroke-width="1.1"/></svg>
<span class="t" style="left:228.5px;top:772.5px;font-size:13.6px;line-height:16px;letter-spacing:-0.42px;color:#838383;">between</span>
<span class="t" style="left:222.8px;top:799.3px;font-size:13.5px;line-height:16px;letter-spacing:-0.43px;color:#000;"><u>S</u>ource:</span>
<div class="b " style="left:223.5px;top:819.5px;width:351px;height:25.5px;background:#ffffff;border:1px solid #adadad;"></div>
<div class="b " style="left:574px;top:819.5px;width:26.5px;height:25.5px;background:#f0f0f0;border:2px solid #c4c4c4;"></div>
<svg class="b" style="left:581px;top:825px;" width="13" height="14" viewBox="0 0 13 14"><path d="M6.5 0 L11.8 5.8 H8.2 V10 H4.8 V5.8 H1.2 Z" fill="#000"/><path d="M1.5 12.6 H11.5" stroke="#000" stroke-width="1.8"/></svg>
<span class="t" style="left:229.0px;top:825.0px;font-size:13.1px;line-height:16px;letter-spacing:-0.44px;color:#000;">=$B$2:$H$2</span>
<div class="b " style="left:209.5px;top:909.3px;width:15px;height:15px;background:#ffffff;border:1px solid #cccccc;"></div>
<span class="t" style="left:230.2px;top:909.1px;font-size:14.1px;line-height:17px;letter-spacing:-0.44px;color:#838383;">Apply these changes to all other cells with the same settings</span>
<div class="b " style="left:195.5px;top:951px;width:111px;height:28.5px;background:#e1e1e1;border:1px solid #adadad;"></div>
<span class="t" style="left:227.5px;top:958.3px;font-size:13.7px;line-height:16px;letter-spacing:-0.44px;color:#000;"><u>C</u>lear All</span>
<div class="b " style="left:523px;top:951px;width:112px;height:28.5px;background:#e5f1fb;border:1px solid #0078d7;"></div>
<span class="t" style="left:570.4px;top:958.8px;font-size:12.5px;line-height:15px;letter-spacing:-0.43px;color:#000;">OK</span>
<div class="b " style="left:650px;top:951px;width:112px;height:28.5px;background:#e1e1e1;border:1px solid #adadad;"></div>
<span class="t" style="left:687.6px;top:958.8px;font-size:12.8px;line-height:15px;letter-spacing:-0.42px;color:#000;">Cancel</span>
<svg class="b" style="left:0px;top:0px;pointer-events:none;" width="777" height="989" viewBox="0 0 777 989"><g fill="none" stroke="#e33be3" stroke-width="1.3"><path d="M447 285.5 L188.6 581.5"/><path d="M170.3 622.5 L220.5 711.3"/><rect x="220.3" y="711.3" width="191.4" height="31.4"/><rect x="220.3" y="817.5" width="85.7" height="32.2"/></g></svg>
<svg class="b" style="left:111.5px;top:689.6px;" width="14" height="21" viewBox="0 0 14 21"><path d="M1 1 V16.5 L4.6 13.2 L7.3 19.3 L9.8 18.2 L7.1 12.2 H12 Z" fill="#fff" stroke="#000" stroke-width="1" stroke-linejoin="miter"/></svg>
<svg class="b" style="left:609.5px;top:969.7px;" width="14" height="21" viewBox="0 0 14 21"><path d="M1 1 V16.5 L4.6 13.2 L7.3 19.3 L9.8 18.2 L7.1 12.2 H12 Z" fill="#fff" stroke="#000" stroke-width="1" stroke-linejoin="miter"/></svg>
<svg class="b" style="left:0px;top:0px;pointer-events:none;" width="777" height="157" viewBox="0 0 777 157"><path d="M20 54 V77 C20 80 25 82.5 33 82.5 M45.6 54 V65" stroke="#c8c8c8" stroke-width="1.6" fill="none" /><ellipse cx="32.8" cy="54" rx="12.8" ry="5.6" stroke="#c8c8c8" stroke-width="1.6" fill="none" /><rect x="33.8" y="65.2" width="18.8" height="19.2" rx="0" stroke="#c8c8c8" stroke-width="1.6" fill="#2e2e2e"/><path d="M33.8 69.3 H52.6" stroke="#c8c8c8" stroke-width="2.6" fill="none" /><path d="M33.8 74.6 H52.6 M33.8 79.5 H52.6 M40 69 V84.4 M46.3 69 V84.4" stroke="#c8c8c8" stroke-width="1.3" fill="none" /><path d="M75 64 H66 V46 H74.5 L80.5 52" stroke="#c8c8c8" stroke-width="1.4" fill="none" /><path d="M74.5 46 V52 H80.5" stroke="#c8c8c8" stroke-width="1.2" fill="none" /><rect x="76" y="54.5" width="6.3" height="9.8" rx="0" stroke="#c8c8c8" stroke-width="1.3" fill="#2e2e2e"/><path d="M77.5 57.5 H81 M77.5 59.8 H81 M77.5 62 H81" stroke="#c8c8c8" stroke-width="1" fill="none" /><rect x="91.7" y="47.2" width="18.6" height="16" rx="0" stroke="#c8c8c8" stroke-width="1.4" fill="none"/><path d="M91.7 52 H110.3 M91.7 57.5 H99 M98 47.2 V63.2 M104 47.2 V55" stroke="#c8c8c8" stroke-width="1.3" fill="none" /><rect x="98.8" y="55.6" width="13" height="9.2" rx="1" stroke="#3a96dd" stroke-width="1" fill="#3a96dd"/><path d="M102.5 55.8 L103.5 54 H107 L108 55.8 Z" stroke="#3a96dd" stroke-width="0.8" fill="#3a96dd" /><circle cx="105.3" cy="60.3" r="2.5" stroke="#2e2e2e" stroke-width="1.3" fill="#3a96dd"/><path d="M72 93.3 H66 V75 H74.5 L80.5 81 V83" stroke="#c8c8c8" stroke-width="1.4" fill="none" /><path d="M74.5 75 V81 H80.5" stroke="#c8c8c8" stroke-width="1.2" fill="none" /><circle cx="77.6" cy="88.6" r="5.6" stroke="#3a96dd" stroke-width="1" fill="#3a96dd"/><path d="M72 88.6 H83.2 M77.6 83 V94.2" stroke="#2e2e2e" stroke-width="1.1" fill="none" /><ellipse cx="77.6" cy="88.6" rx="2.6" ry="5.6" stroke="#2e2e2e" stroke-width="1" fill="none" /><path d="M100 93.3 H94 V75 H102.5 L108.5 81 V83" stroke="#c8c8c8" stroke-width="1.4" fill="none" /><path d="M102.5 75 V81 H108.5" stroke="#c8c8c8" stroke-width="1.2" fill="none" /><circle cx="106" cy="88.6" r="5.2" stroke="#3a96dd" stroke-width="1.5" fill="#2e2e2e"/><path d="M106 85.4 V88.8 H108.8" stroke="#3a96dd" stroke-width="1.3" fill="none" /><rect x="63.7" y="104" width="17.6" height="17.3" rx="0" stroke="#c8c8c8" stroke-width="1.5" fill="none"/><path d="M63.7 110 H81.3 M63.7 113.8 H81.3 M63.7 117.5 H81.3 M72.5 110 V121.3" stroke="#c8c8c8" stroke-width="1.2" fill="none" /><path d="M66 105.8 H71 L68.5 108.6 Z M74 105.8 H79 L76.5 108.6 Z" stroke="#3a96dd" stroke-width="0.6" fill="#3a96dd" /><path d="M100 121.8 H94 V104 H102.5 L108.5 110 V111" stroke="#c8c8c8" stroke-width="1.4" fill="none" /><path d="M102.5 104 V110 H108.5" stroke="#c8c8c8" stroke-width="1.2" fill="none" /><path d="M100.8 113 V119.6 C100.8 122.4 110.6 122.4 110.6 119.6 V113" stroke="#e9a95f" stroke-width="1.4" fill="#2e2e2e" /><ellipse cx="105.7" cy="113" rx="4.9" ry="2.2" stroke="#e9a95f" stroke-width="1.4" fill="#2e2e2e" /><path d="M166.5 80 V48.2 H184" stroke="#c8c8c8" stroke-width="1.5" fill="none" /><path d="M193.5 66 V61.5 L184.5 52.3 H171 V82 H180" stroke="#c8c8c8" stroke-width="1.5" fill="none" /><path d="M184.5 52.3 V61.5 H193.5" stroke="#c8c8c8" stroke-width="1.4" fill="none" /><path d="M182.2 72.5 A8.6 8.6 0 0 1 198.5 71.5" stroke="#5fca77" stroke-width="1.7" fill="none" /><path d="M198.8 78.3 A8.6 8.6 0 0 1 182.5 79.3" stroke="#5fca77" stroke-width="1.7" fill="none" /><path d="M199.3 66.5 V72 H193.8" stroke="#5fca77" stroke-width="1.7" fill="none" /><path d="M181.7 84.3 V78.8 H187.2" stroke="#5fca77" stroke-width="1.7" fill="none" /><rect x="211.7" y="49" width="18.6" height="15.6" rx="0" stroke="#c8c8c8" stroke-width="1.5" fill="none"/><path d="M211.7 51.3 H230.3" stroke="#c8c8c8" stroke-width="1.3" fill="none" /><path d="M224.3 51.5 V64.3" stroke="#3a96dd" stroke-width="1.8" fill="none" /><path d="M227 54.5 H229 M227 57.5 H229 M227 60.5 H229" stroke="#3a96dd" stroke-width="1.4" fill="none" /><rect x="213.5" y="77.8" width="14.8" height="18.2" rx="0" stroke="#7b7b7b" stroke-width="1.4" fill="none"/><rect x="217.3" y="82.3" width="3" height="3" rx="0" stroke="#7b7b7b" stroke-width="1.1" fill="none"/><rect x="217.3" y="88.5" width="3" height="3" rx="0" stroke="#7b7b7b" stroke-width="1.1" fill="none"/><path d="M222.5 83.8 H225 M222.5 90 H225" stroke="#7b7b7b" stroke-width="1.3" fill="none" /><path d="M218 126.3 H213.7 V108.3 H222.5 L228.5 114.5 V117" stroke="#7b7b7b" stroke-width="1.4" fill="none" /><path d="M222.5 108.3 V114.5 H228.5" stroke="#7b7b7b" stroke-width="1.2" fill="none" /><ellipse cx="222.3" cy="122" rx="3.8" ry="2.6" stroke="#7b7b7b" stroke-width="1.4" fill="none" /><ellipse cx="226.8" cy="123.3" rx="3.8" ry="2.6" stroke="#7b7b7b" stroke-width="1.4" fill="none" /><path d="M290 67.3 L306.4 58 L322.8 67.3 Z" stroke="#c8c8c8" stroke-width="1.5" fill="none" stroke-linejoin="round"/><path d="M293.5 67.5 V81.8 M297.5 67.5 V81.8 M302.5 67.5 V81.8 M306.4 67.5 V81.8 M310.5 67.5 V81.8 M315.3 67.5 V81.8 M319.3 67.5 V81.8" stroke="#c8c8c8" stroke-width="1.3" fill="none" /><path d="M291 82 H322 M289.8 85.8 H323.2" stroke="#c8c8c8" stroke-width="1.5" fill="none" /><path d="M291 82 L289.8 85.8 M322 82 L323.2 85.8" stroke="#c8c8c8" stroke-width="1.2" fill="none" /><rect x="388" y="61.5" width="34.3" height="20.5" rx="0" stroke="#c8c8c8" stroke-width="1.5" fill="none"/><path d="M396 65.5 H392.3 V78 H396 M414.3 65.5 H418 V70" stroke="#c8c8c8" stroke-width="1.4" fill="none" /><ellipse cx="405.2" cy="71.7" rx="4.2" ry="6.2" stroke="#c8c8c8" stroke-width="1.5" fill="none" /><path d="M407.8 77 V86.8 C407.8 91.2 424.2 91.2 424.2 86.8 V77" stroke="#c8c8c8" stroke-width="1.4" fill="#444444" /><ellipse cx="416" cy="77" rx="8.2" ry="3.2" stroke="#c8c8c8" stroke-width="1.4" fill="#444444" /><path d="M407.8 80.5 C407.8 84.7 424.2 84.7 424.2 80.5 M407.8 83.8 C407.8 88 424.2 88 424.2 83.8" stroke="#c8c8c8" stroke-width="1.3" fill="none" /><path d="M513.3 52.3 H531.3 V54 L524.6 62.5 V71 H520 V62.5 L513.3 54 Z" stroke="#c8c8c8" stroke-width="1.5" fill="none" stroke-linejoin="round"/><rect x="585" y="52.3" width="14" height="19.2" rx="0" stroke="#ddd" stroke-width="1.2" fill="none"/><rect x="585.8" y="53.2" width="12.4" height="5.8" rx="0" stroke="#1e7fd6" stroke-width="0.5" fill="#1e7fd6"/><rect x="585.8" y="65.5" width="6.2" height="5.2" rx="0" stroke="#1e7fd6" stroke-width="0.5" fill="#1e7fd6"/><path d="M585 59.5 H599 M585 65 H599" stroke="#c8c8c8" stroke-width="1" fill="none" /><path d="M592 71.5 H599.5 V65" stroke="#363636" stroke-width="2.2" fill="none" /><path d="M593.8 63 L603 72.2 M603 63 L593.8 72.2" stroke="#e8545a" stroke-width="1.5" fill="none" /><rect x="656.3" y="53.5" width="19.4" height="17" rx="0" stroke="#9a9a9a" stroke-width="1.1" fill="none"/><path d="M662.8 53.5 V70.5 M669.3 53.5 V70.5 M656.3 59.2 H675.7 M656.3 64.8 H675.7" stroke="#9a9a9a" stroke-width="1" fill="none" /><rect x="656.6" y="53.8" width="5.9" height="5" rx="0" stroke="#1e7fd6" stroke-width="0.3" fill="#1e7fd6"/><rect x="656.6" y="65.2" width="5.9" height="5" rx="0" stroke="#1e7fd6" stroke-width="0.3" fill="#1e7fd6"/><path d="M667.3 73 H678 V60.2 H667.3 Z" stroke="#383838" stroke-width="1" fill="#383838" /><path d="M668.8 63.3 C668.8 58.9 675.8 58.9 675.8 63.2 C675.8 65.8 672.3 66 672.3 68.6" stroke="#3a96dd" stroke-width="1.7" fill="none" /><circle cx="672.3" cy="71.3" r="1" stroke="#3a96dd" stroke-width="0.4" fill="#3a96dd"/><rect x="729.2" y="57" width="7.6" height="7.8" rx="0" stroke="#d0d0d0" stroke-width="1.5" fill="none"/><path d="M731 60.9 H735 M733 58.9 V62.9" stroke="#3a96dd" stroke-width="1.5" fill="none" /><path d="M733 57 V53.8 H738.6 M733 64.8 V68.2 H738.6" stroke="#8c8c8c" stroke-width="1" fill="none" /><rect x="740.8" y="53.8" width="7.8" height="15.8" rx="0" stroke="#d0d0d0" stroke-width="1.5" fill="none"/><path d="M740.8 59.1 H748.6 M740.8 64.4 H748.6" stroke="#b0b0b0" stroke-width="1.2" fill="none" /></svg>
<svg class="b" style="left:0px;top:0px;pointer-events:none;" width="777" height="280" viewBox="0 0 777 280"><path d="M271 170 H286 M271 175 H286 M274.8 180 H286" stroke="#c8c8c8" stroke-width="1.6" fill="none" /><path d="M272 180.8 C266.5 181.5 264.3 188 268 191.5 C270.5 193.8 275 195 281 195.1" stroke="#3a96dd" stroke-width="1.6" fill="none" /><path d="M276.3 189.8 L281.9 195.1 L276.3 200.5" stroke="#3a96dd" stroke-width="1.6" fill="none" /><rect x="291.8" y="165" width="11.4" height="33.8" rx="0" stroke="#c8c8c8" stroke-width="1.5" fill="none"/><path d="M291.8 176.4 H303.2 M291.8 187.4 H303.2" stroke="#c8c8c8" stroke-width="1.4" fill="none" /><path d="M294.8 170.3 H300.2 M294.8 181.5 H300.2 M294.8 192.8 H300.2" stroke="#3a96dd" stroke-width="1.6" fill="none" /><rect x="326" y="168.8" width="34.6" height="26.2" rx="0" stroke="#c8c8c8" stroke-width="1.5" fill="none"/><path d="M326 178.4 H360.6 M326 187 H360.6" stroke="#c8c8c8" stroke-width="1.3" fill="none" /><rect x="336.2" y="169.6" width="14.8" height="8.2" rx="0" stroke="#1e7fd6" stroke-width="0.3" fill="#1f74cf"/><path d="M335.8 169 V195 M351.2 169 V195 M335.8 178.4 H351.2 M335.8 187 H351.2 M335.8 195 H351.2" stroke="#79b7ea" stroke-width="1.5" fill="none" /><path d="M330.5 162.2 H339.3 L334.3 170.7 H339.6 L324.4 186.3 L328.7 176.1 H323 Z" stroke="#353535" stroke-width="2" fill="#f2a630" stroke-linejoin="round" paint-order="stroke"/><rect x="393.6" y="165.3" width="24.2" height="33.2" rx="0" stroke="#ddd" stroke-width="1.5" fill="none"/><rect x="394.8" y="166.5" width="21.8" height="9" rx="0" stroke="#1e7fd6" stroke-width="0.3" fill="#1e7fd6"/><rect x="394.8" y="188.3" width="13.2" height="9" rx="0" stroke="#1e7fd6" stroke-width="0.3" fill="#1e7fd6"/><path d="M393.6 176.3 H417.8 M393.6 187.5 H417.8" stroke="#c8c8c8" stroke-width="1.2" fill="none" /><path d="M408.5 198.5 H418.5 V187" stroke="#353535" stroke-width="3" fill="none" /><path d="M410 186.5 L425.5 202 M425.5 186.5 L410 202" stroke="#e8545a" stroke-width="1.8" fill="none" /><path d="M491 167.8 H470 V177.3 H490" stroke="#c8c8c8" stroke-width="1.5" fill="none" /><path d="M489.8 172.2 L495.6 177.3 L506.3 166.3" stroke="#5fca77" stroke-width="1.7" fill="none" /><path d="M489 185.3 H470 V195.3 H489.5" stroke="#c8c8c8" stroke-width="1.5" fill="none" /><circle cx="497.6" cy="190.3" r="6.3" stroke="#e8545a" stroke-width="1.7" fill="#494949"/><path d="M493.3 186 L502 194.7" stroke="#e8545a" stroke-width="1.7" fill="none" /><path d="M568.7 165.5 H555.7 V197 H568.7 M568.7 165.5 V172.5 M568.7 190.5 V197 M555.7 175 H568.7 M555.7 187.5 H568.7 M568.7 172.5 V175 M568.7 187.5 V190.5" stroke="#c8c8c8" stroke-width="1.5" fill="none" /><path d="M568.7 175 V187.5" stroke="#353535" stroke-width="2" fill="none" /><path d="M555.7 181.2 H560.5" stroke="#c8c8c8" stroke-width="1.2" fill="none" /><path d="M561 181.2 H574 M569.8 176.5 L574.5 181.2 L569.8 186" stroke="#3a96dd" stroke-width="1.5" fill="none" /><rect x="576.6" y="177.5" width="13" height="7.5" rx="0" stroke="#3a96dd" stroke-width="1.5" fill="none"/><path d="M580.5 181.2 H585.8" stroke="#aaa" stroke-width="1.3" fill="none" /><rect x="643" y="175.3" width="13" height="13.3" rx="0" stroke="#7b7b7b" stroke-width="1.4" fill="none"/><rect x="663.2" y="165.3" width="13.5" height="13" rx="0" stroke="#7b7b7b" stroke-width="1.4" fill="none"/><rect x="663.2" y="185.2" width="13.5" height="13" rx="0" stroke="#7b7b7b" stroke-width="1.4" fill="none"/><path d="M656 182 L663.2 174 M656 182 L663.2 190" stroke="#7b7b7b" stroke-width="1.4" fill="none" /><path d="M646 180 H653 M646 184 H653 M666.3 170 H673.5 M666.3 174 H673.5 M666.3 189.7 H673.5 M666.3 193.7 H673.5" stroke="#7b7b7b" stroke-width="1.3" fill="none" /><path d="M731.3 170.5 C733.5 166.5 741 163.8 749.6 163.8 C756.5 163.8 761.6 165.6 763.6 168.6 V172 L753.5 167.4 L735.4 175 V195.8 L753.5 200.6 L743.6 199 L733.2 196 L731.3 193.8 Z" stroke="#6db33f" stroke-width="0.4" fill="#6db33f" stroke-linejoin="round"/><path d="M764 172.8 L753.5 168.1 L736.4 175.5 V195 L753.5 200.2" stroke="#26400f" stroke-width="1.9" fill="none" /><path d="M737.6 176 L753.2 169.4 V199.7 L737.6 194.8 Z" stroke="#74ba3f" stroke-width="0.3" fill="#74ba3f" /><path d="M753.8 169.4 L767.4 176 V194.3 L753.8 199.7 Z" stroke="#f3f9ec" stroke-width="0.3" fill="#f3f9ec" /><path d="M753.8 177.4 L767.4 181 M753.8 184.6 L767.4 186.2 M753.8 191.6 L767.4 190.8" stroke="#74ba3f" stroke-width="1.5" fill="none" /><path d="M761 172.8 V197" stroke="#74ba3f" stroke-width="1.4" fill="none" /><path d="M744.1 176.4 L751.6 173.3" stroke="#fff" stroke-width="1.9" fill="none" /><path d="M740.4 181.3 V191.3" stroke="#fff" stroke-width="1.5" fill="none" /><circle cx="740.4" cy="178" r="0.85" stroke="#fff" stroke-width="0.2" fill="#fff"/><path d="M750 181 V191.2 H745.2" stroke="#eef7e6" stroke-width="1.2" fill="none" /><path d="M747.6 183.3 L750 180.6 L752.3 183.3 M747.2 189 L744.8 191.2 L747.2 193.4" stroke="#eef7e6" stroke-width="1.1" fill="none" /></svg>
<svg class="b" style="left:0px;top:0px;pointer-events:none;" width="777" height="365" viewBox="0 0 777 365"><path d="M471 261.2 H460.8 V266.3 H471" stroke="#c8c8c8" stroke-width="1.4" fill="none" /><path d="M469.3 262.3 L473 265.6 L479.8 258.6" stroke="#5fca77" stroke-width="1.5" fill="none" /><path d="M468 270.8 H460.8 V276.2 H468.5" stroke="#c8c8c8" stroke-width="1.4" fill="none" /><circle cx="473.8" cy="272.9" r="4.5" stroke="#e8545a" stroke-width="1.5" fill="#474645"/><path d="M470.7 269.8 L476.9 276" stroke="#e8545a" stroke-width="1.5" fill="none" /><path d="M480 296 H461 V310.7 H480" stroke="#c8c8c8" stroke-width="1.5" fill="none" /><path d="M464 296 V298 M467 296 V297.5 M470 296 V298 M473 296 V297.5 M476 296 V298 M461 301 H462.7 M461 305.5 H462.7 M465 310.7 V309 M470 310.7 V309 M475 310.7 V309" stroke="#c8c8c8" stroke-width="0.9" fill="none" /><ellipse cx="470.9" cy="303.3" rx="6.6" ry="4.1" stroke="#e8545a" stroke-width="1.6" fill="none" /><path d="M467 303.3 H475" stroke="#c8c8c8" stroke-width="1.3" fill="none" /><path d="M480 332 H461 V346.8 H466" stroke="#c8c8c8" stroke-width="1.5" fill="none" /><path d="M464 332 V334 M467 332 V333.5 M470 332 V334 M473 332 V333.5 M476 332 V334 M461 337 H462.7 M461 341.5 H462.7" stroke="#c8c8c8" stroke-width="0.9" fill="none" /><path d="M475.5 336.5 C471 333.5 464 336 464.3 339.5 C464.5 341.5 466.5 342.8 468.5 343" stroke="#e8545a" stroke-width="1.5" fill="none" /><path d="M467 338.5 H472" stroke="#c8c8c8" stroke-width="1.2" fill="none" /><path d="M475.6 338.3 L480 342.6 L472.6 350 L468.2 345.7 Z" stroke="#c66ad8" stroke-width="1.4" fill="#2f2f2f" stroke-linejoin="round"/><path d="M470.6 343.9 L474.4 347.7 L472.6 349.5 L468.8 345.7 Z" stroke="#c66ad8" stroke-width="0.5" fill="#c66ad8" /></svg>
</body></html>
